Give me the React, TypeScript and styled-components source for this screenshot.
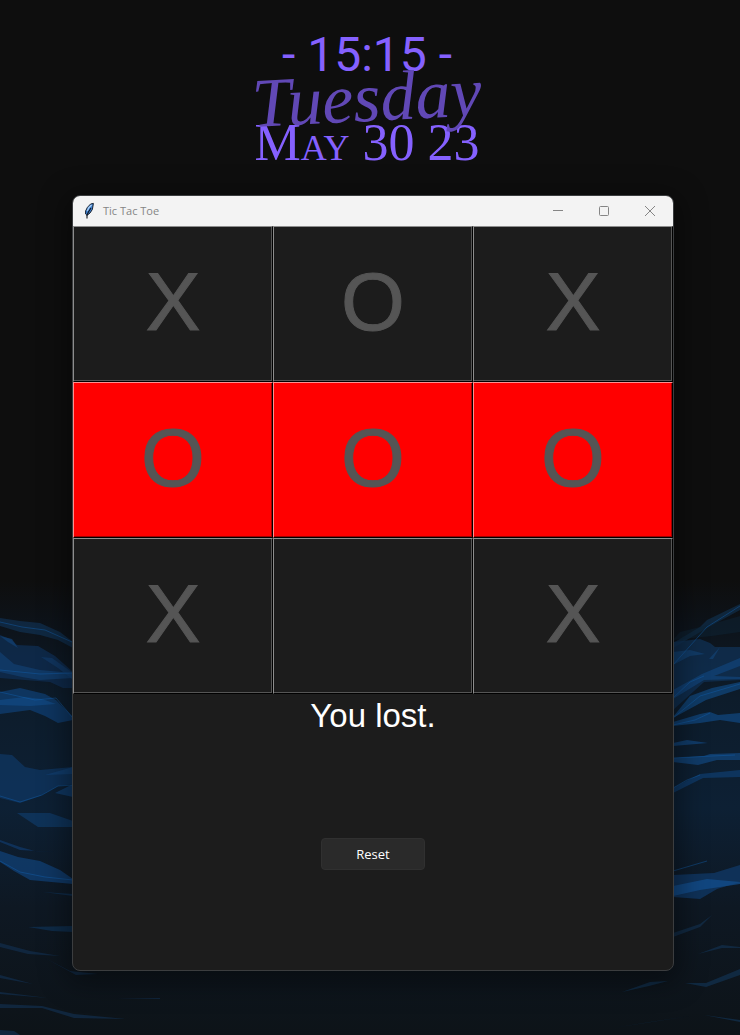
import React, { useState } from "react";
import styled, { createGlobalStyle } from "styled-components";

const GlobalStyle = createGlobalStyle`
  * { box-sizing: border-box; }
  body { margin: 0; background: #0e0e0e; }
`;

const Desktop = styled.main`
  position: relative;
  min-height: 100vh;
  padding: 31px 66px 64px 72px;
  overflow: hidden;
`;

const Wallpaper = styled.svg`
  position: absolute;
  left: 0;
  bottom: 0;
  width: 100%;
  height: 455px;
`;

const Widget = styled.header`
  position: relative;
  display: flex;
  flex-direction: column;
  align-items: center;
  height: 164px;
  padding-right: 12px;
  color: #8561ff;
  white-space: nowrap;
`;

const Clock = styled.time`
  font: 48px/48px Roboto, sans-serif;
`;

const Weekday = styled.span`
  font: italic 70px/38px "Liberation Serif", serif;
  color: #6148b6;
  transform: rotate(-3deg);
`;

const CalendarDate = styled.span`
  font: small-caps 52px/52px "Liberation Serif", serif;
`;

const Window = styled.section`
  position: relative;
  border: 1px solid #3b3d3f;
  border-radius: 8px;
  background: #1c1c1c;
  box-shadow: 0 6px 28px 6px rgba(0, 0, 0, 0.4);
  overflow: hidden;
`;

const TitleBar = styled.div`
  display: flex;
  align-items: center;
  height: 30px;
  padding-left: 9px;
  background: #f3f3f3;
`;

const Title = styled.h1`
  flex: 1;
  margin: 0 0 0 7px;
  font: 11px/16px "Open Sans", "Noto Sans", sans-serif;
  color: #858585;
`;

const WindowButton = styled.button`
  display: grid;
  place-items: center;
  width: 46px;
  height: 30px;
  padding: 0;
  border: 0;
  background: transparent;
  color: #858585;
`;

const Board = styled.div`
  display: grid;
  grid-template-columns: repeat(3, 1fr);
  grid-auto-rows: 156px;
`;

const Cell = styled.button<{ $winning: boolean }>`
  padding: 0 0 4px;
  border: 1px solid;
  border-color: ${(p) => (p.$winning ? "#ff8f8f #000 #000 #ff8f8f" : "#8d8d8d #000 #000 #8d8d8d")};
  background: ${(p) => (p.$winning ? "#ff0000" : "#1c1c1c")};
  box-shadow: inset -1px -1px ${(p) => (p.$winning ? "#a00000" : "#555")};
  color: #555;
  font: 82px/92px "Liberation Sans", Arial, sans-serif;
  -webkit-text-stroke: 1px #555;
`;

const Footer = styled.div`
  display: flex;
  flex-direction: column;
  align-items: center;
  padding: 4px 0 100px;
`;

const Result = styled.p`
  margin: 0 0 104px;
  font: 33px/36px "Liberation Sans", Arial, sans-serif;
  color: #fff;
`;

const ResetButton = styled.button`
  width: 104px;
  height: 32px;
  border: 1px solid #303030;
  border-radius: 4px;
  background: #2a2a2a;
  color: #fff;
  font: 13px/18px "Open Sans", "Noto Sans", sans-serif;
`;

const Feather = () => (
  <svg width="14" height="18" viewBox="0 0 14 18" aria-hidden="true">
    <path d="M11.4 1.4 L8.6 2 L5.4 5.4 L3.6 9 L3.6 12 L5 13.4 L8 11 L10.4 7.4 Z" fill="#3d7fd0" stroke="#1b2430" strokeWidth="1" />
    <path d="M9.6 3 L7 5.4 L5.2 9" stroke="#a9d0f8" strokeWidth="1.4" fill="none" />
    <path d="M9 6 L6.4 10 L5 13 V16.6" stroke="#10151c" strokeWidth="1.1" fill="none" />
  </svg>
);

const bands: [string, string, number][] = [
  ["M0 28 L20 31 L40 33 L60 42 L73 52 V58 L58 50 L40 45 L20 42 L0 36Z", "#12406f", 0.45],
  ["M0 45 L10 49 L17 55 L38 56 L55 66 L73 82 V98 L63 98 L50 92 L0 88Z", "#0f2c4e", 0.85],
  ["M0 46 L12 49 L18 58 L8 52Z", "#114073", 0.7],
  ["M0 62 L14 74 L40 80 L73 83 V88 L40 90 L22 87 L0 82Z", "#124278", 0.6],
  ["M41 67 L52 68 L73 83 V90 L58 78Z", "#114073", 0.5],
  ["M0 102 L20 98 L45 104 L56 110 L73 127 V130 L58 133 L45 126 L30 120 L0 124Z", "#104076", 0.7],
  ["M0 110 L24 107 L42 109 L56 114 L30 116 L0 115Z", "#145aa0", 0.4],
  ["M0 164 L12 165 L25 177 L40 180 L73 177 V194 L58 196 L40 206 L20 213 L0 208Z", "#0f345f", 0.8],
  ["M45 185 L73 177 V184Z M55 203 L73 194 V207Z", "#114073", 0.7],
  ["M17 223 L50 223 L73 231 V237 H38Z", "#0f3a68", 0.7],
  ["M0 250 L20 257 L35 261 L55 262 L20 260 L0 252Z", "#104076", 0.6],
  ["M0 261 L18 267 L40 271 L60 280 L73 289 V294 L30 290 L14 281 L0 272Z", "#104076", 0.75],
  ["M43 302 L73 304 V306Z M28 337 L73 336 V342 L52 341Z", "#10345b", 0.65],
  ["M0 353 L30 361 L60 366 L28 364 L0 357Z M0 385 L33 394 L0 388Z M45 368 L70 381 L98 384 L76 385Z", "#112c49", 0.75],
  ["M0 402 L48 408 L0 404Z M0 414 L42 416 L74 424 L126 429 L74 428 L42 418 L0 418Z M116 409 L160 408 V409Z M0 440 L14 441 L20 445 H0Z", "#112c49", 0.75],
  ["M673 53 L700 37 L707 30 L740 14 V20 L707 38 L673 58Z", "#113454", 0.6],
  ["M680 42 L712 34 L740 26 V42 L712 46 L673 50Z", "#0e2336", 0.5],
  ["M673 52 L700 49 L710 53 L715 57 L740 57 V90 L704 92 L673 120Z", "#103155", 0.75],
  ["M673 62 L690 60 L705 64 L690 66 L673 75Z M709 69 L720 57 L713 69Z", "#134272", 0.7],
  ["M673 100 L702 84 L740 68 V76 L714 86 L740 87 V89 L704 90 L673 109Z", "#11447a", 0.7],
  ["M673 127 L690 106 L712 98 L740 92 V99 L706 110 L673 128Z", "#114880", 0.7],
  ["M673 132 L700 124 L710 122 L718 125 L740 123 V133 L720 130 L700 133 L673 136Z", "#115091", 0.6],
  ["M673 153 L687 150 L708 153 L673 156Z M673 168 L704 166 L710 164 L740 163 V170 L717 170 L698 175 L673 172Z", "#124780", 0.7],
  ["M673 198 L700 184 L740 180 V187 L703 188 L673 203Z", "#104174", 0.65],
  ["M673 285 L714 283 L740 275 V292 L717 299 L700 309 L673 307Z", "#103a68", 0.75],
  ["M673 296 L707 289 L740 292 V294 L700 300 L673 306Z", "#134d8c", 0.75],
  ["M673 343 L700 334 L712 325 L700 337 L673 347Z M698 364 L722 355 L740 357 V358 L722 358Z", "#12304e", 0.7],
  ["M622 402 L650 392 L668 391 L649 396Z M685 393 L706 393 L740 379 V385 L706 397Z M613 438 L690 426 L650 432Z M704 425 L740 430 V432Z", "#12304e", 0.75],
];

const crests = [
  "M0 32 L22 37 L45 40 L72 52", "M0 80 L40 84 L73 83", "M0 102 L35 110 L56 108 L73 128",
  "M0 206 L20 212 L42 205 L58 196 L73 195", "M0 271 L20 282 L45 287 L73 290", "M673 108 L690 92 L704 86",
  "M673 135 L695 130 L710 123", "M673 168 L712 166 L735 165", "M673 198 L687 190 L700 185",
  "M673 281 L707 271", "M673 75 L707 37 L740 16", "M673 128 L700 106 L740 94",
];

const Waves = () => (
  <Wallpaper viewBox="0 -10 740 455" preserveAspectRatio="none" aria-hidden="true">
    <defs>
      <linearGradient id="sea" x1="0" y1="0" x2="0" y2="1">
        <stop offset="0" stopColor="#0e0e0e" />
        <stop offset="0.1" stopColor="#0d131a" />
        <stop offset="0.26" stopColor="#0d1c2b" />
        <stop offset="0.5" stopColor="#0d2034" />
        <stop offset="0.72" stopColor="#0e1823" />
        <stop offset="1" stopColor="#0d1318" />
      </linearGradient>
    </defs>
    <rect y="-10" width="740" height="455" fill="url(#sea)" />
    {bands.map(([d, fill, opacity]) => (
      <path key={d} d={d} fill={fill} opacity={opacity} />
    ))}
    {crests.map((d) => (
      <path key={d} d={d} fill="none" stroke="#1260ae" strokeWidth="1" opacity="0.45" />
    ))}
  </Wallpaper>
);

const WINNING_ROW = [3, 4, 5];
const FINISHED_GAME = ["X", "O", "X", "O", "O", "O", "X", "", "X"];

export default function App() {
  const [marks, setMarks] = useState(FINISHED_GAME);
  const lost = WINNING_ROW.every((i) => marks[i] === "O");
  return (
    <>
      <GlobalStyle />
      <Desktop>
        <Waves />
        <Widget>
          <Clock>- 15:15 -</Clock>
          <Weekday>Tuesday</Weekday>
          <CalendarDate>May 30 23</CalendarDate>
        </Widget>
        <Window>
          <TitleBar>
            <Feather />
            <Title>Tic Tac Toe</Title>
            <WindowButton aria-label="Minimize">
              <svg width="10" height="10" fill="none" stroke="currentColor"><path d="M0 4.5H10" /></svg>
            </WindowButton>
            <WindowButton aria-label="Maximize">
              <svg width="10" height="10" fill="none" stroke="currentColor"><rect x="0.5" y="0.5" width="9" height="9" rx="1" /></svg>
            </WindowButton>
            <WindowButton aria-label="Close">
              <svg width="10" height="10" fill="none" stroke="currentColor"><path d="M0 0L10 10M10 0L0 10" /></svg>
            </WindowButton>
          </TitleBar>
          <Board>
            {marks.map((mark, i) => (
              <Cell key={i} $winning={lost && WINNING_ROW.includes(i)} aria-label={mark ? undefined : "Empty square"}>
                {mark}
              </Cell>
            ))}
          </Board>
          <Footer>
            <Result>{lost ? "You lost." : "\u00a0"}</Result>
            <ResetButton onClick={() => setMarks(Array(9).fill(""))}>Reset</ResetButton>
          </Footer>
        </Window>
      </Desktop>
    </>
  );
}
